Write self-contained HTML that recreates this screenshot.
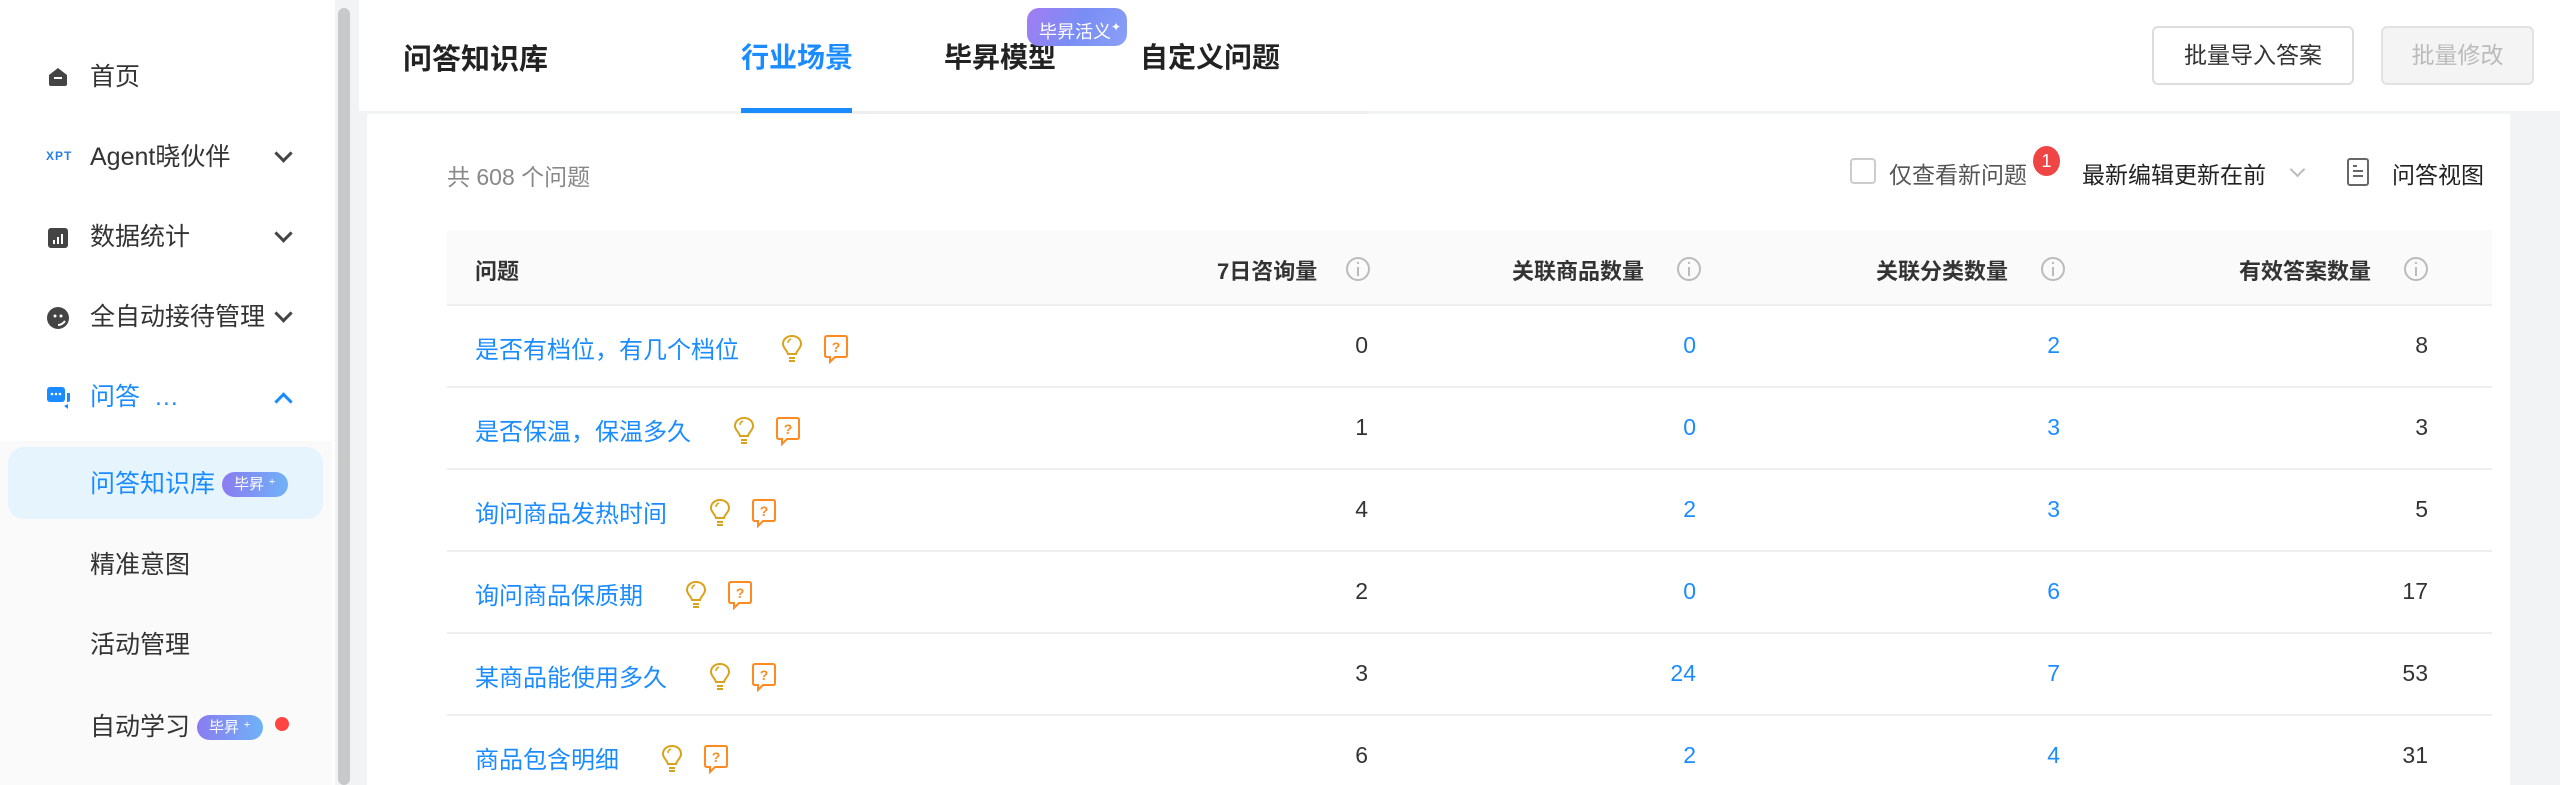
<!DOCTYPE html>
<html><head><meta charset="utf-8"><style>
*{margin:0;padding:0;box-sizing:border-box}
body{width:2560px;height:785px;overflow:hidden;background:#f2f3f5;font-family:"Liberation Sans","Noto Sans CJK SC",sans-serif;color:#333;position:relative}
.a{position:absolute;white-space:nowrap}
.side{position:absolute;left:0;top:0;width:335px;height:785px;background:#fff}
.sub{position:absolute;left:0;top:441px;width:332px;height:344px;background:#fafafa}
.sb{position:absolute;left:338px;top:8px;width:12px;height:777px;background:#c9c9c9;border-radius:6px}
.mi{font-size:25px;color:#333;line-height:30px}
.chev{position:absolute;width:13px;height:13px;border-right:3px solid #444;border-bottom:3px solid #444;transform:rotate(45deg)}
.badge{display:inline-block;background:linear-gradient(90deg,#8a7cf0,#6fb2f8);color:#fff;font-size:15px;border-radius:14px;padding:3px 12px;line-height:19px}
.th{font-size:22px;font-weight:bold;color:#333;top:254px}
.info{position:absolute;width:24px;height:24px;border:2px solid #bbb;border-radius:50%;top:257px}
.info:after{content:"";position:absolute;left:9px;top:8px;width:2px;height:9px;background:#bbb}
.info:before{content:"";position:absolute;left:9px;top:3px;width:2px;height:2px;background:#bbb}
.q{font-size:24px;color:#1a8cff}
.n{font-size:23px;text-align:right;width:100px}
.line{position:absolute;left:447px;width:2045px;height:2px;background:#eee}
</style></head><body>
<div class="side"></div>
<div class="sub"></div>
<div style="position:absolute;left:8px;top:447px;width:315px;height:72px;background:#e6f4fd;border-radius:16px"></div>
<div class="sb"></div>
<svg class="a" style="left:47px;top:66px" width="22" height="22"><path d="M2 9 L11 2 L20 9 V18 Q20 20 18 20 H4 Q2 20 2 18Z" fill="#444"/><rect x="7" y="11" width="8" height="2" fill="#fff"/></svg>
<div class="a mi" style="left:90px;top:62px">首页</div>
<div class="a" style="left:46px;top:149px;font-size:12px;font-weight:bold;color:#2a7fe0;letter-spacing:1px">XPT</div>
<div class="a mi" style="left:90px;top:142px">Agent晓伙伴</div>
<div class="chev" style="left:277px;top:147px"></div>
<svg class="a" style="left:47px;top:227px" width="22" height="22"><rect x="1" y="1" width="20" height="20" rx="3" fill="#444"/><rect x="6" y="13" width="2" height="4" fill="#fff"/><rect x="10" y="10" width="2" height="7" fill="#fff"/><rect x="14" y="7" width="2" height="10" fill="#fff"/></svg>
<div class="a mi" style="left:90px;top:222px">数据统计</div>
<div class="chev" style="left:277px;top:227px"></div>
<svg class="a" style="left:46px;top:306px" width="24" height="24"><circle cx="12" cy="12" r="11" fill="#444"/><circle cx="9" cy="10" r="1.5" fill="#fff"/><circle cx="15" cy="10" r="1.5" fill="#fff"/><path d="M12 19 Q16 19 19 15" stroke="#fff" stroke-width="2" fill="none"/></svg>
<div class="a mi" style="left:90px;top:302px">全自动接待管理</div>
<div class="chev" style="left:277px;top:307px"></div>
<svg class="a" style="left:46px;top:386px" width="26" height="24"><rect x="1" y="1" width="18" height="15" rx="3" fill="#1a8cff"/><path d="M8 16 H22 Q24 16 24 14 V7 H21 V16Z" fill="#1a8cff"/><path d="M18 20 L22 23 L22 18Z" fill="#1a8cff"/><circle cx="6" cy="8" r="1.3" fill="#fff"/><circle cx="10" cy="8" r="1.3" fill="#fff"/><circle cx="14" cy="8" r="1.3" fill="#fff"/></svg>
<div class="a mi" style="left:90px;top:382px;color:#1a8cff">问答 &nbsp;…</div>
<div class="chev" style="left:277px;top:395px;border-color:#1a8cff;transform:rotate(225deg)"></div>
<div class="a mi" style="left:90px;top:469px;color:#1a8cff">问答知识库 <span class="badge" style="vertical-align:3px">毕昇 ⁺</span></div>
<div class="a mi" style="left:90px;top:550px">精准意图</div>
<div class="a mi" style="left:90px;top:630px">活动管理</div>
<div class="a mi" style="left:90px;top:712px">自动学习 <span class="badge" style="vertical-align:3px">毕昇 ⁺</span></div>
<div class="a" style="left:275px;top:717px;width:14px;height:14px;border-radius:50%;background:#f44"></div>
<div class="a" style="left:359px;top:0;width:2201px;height:111px;background:#fff"></div>
<div class="a" style="left:403px;top:36px;font-size:29px;color:#222;font-weight:bold">问答知识库</div>
<div class="a" style="left:741px;top:36px;font-size:28px;color:#1a8cff;font-weight:bold">行业场景</div>
<div class="a" style="left:944px;top:36px;font-size:28px;color:#222;font-weight:bold">毕昇模型</div>
<div class="a" style="left:1140px;top:36px;font-size:28px;color:#222;font-weight:bold">自定义问题</div>
<div class="a" style="left:1027px;top:8px;width:100px;height:38px;border-radius:12px;background:linear-gradient(120deg,#a27cf2,#7a8df5,#8aa0f8);color:#fff;font-size:18px;line-height:38px;padding-left:12px">毕昇活义<sup style="font-size:12px">✦</sup></div>
<div class="a" style="left:741px;top:111px;width:627px;height:3px;background:#eee"></div>
<div class="a" style="left:741px;top:108px;width:111px;height:5px;background:#1a8cff"></div>
<div class="a" style="left:2152px;top:26px;width:202px;height:59px;border:2px solid #ddd;border-radius:6px;background:#fff;font-size:23px;text-align:center;line-height:55px;color:#333">批量导入答案</div>
<div class="a" style="left:2381px;top:26px;width:153px;height:59px;border:2px solid #e2e2e2;border-radius:6px;background:#f4f4f4;font-size:23px;text-align:center;line-height:55px;color:#bbb">批量修改</div>
<div class="a" style="left:367px;top:114px;width:2143px;height:671px;background:#fff"></div>
<div class="a" style="left:447px;top:158px;font-size:23px;color:#888">共 608 个问题</div>
<div class="a" style="left:1850px;top:158px;width:26px;height:26px;border:2px solid #ccc;border-radius:4px"></div>
<div class="a" style="left:1889px;top:156px;font-size:23px;color:#555">仅查看新问题</div>
<div class="a" style="left:2033px;top:146px;width:27px;height:30px;border-radius:50%;background:#f04545;color:#fff;font-size:18px;text-align:center;line-height:30px">1</div>
<div class="a" style="left:2082px;top:156px;font-size:23px;color:#222">最新编辑更新在前</div>
<div class="a" style="left:2292px;top:164px;width:11px;height:11px;border-right:2px solid #bbb;border-bottom:2px solid #bbb;transform:rotate(45deg)"></div>
<svg class="a" style="left:2347px;top:158px" width="22" height="28"><rect x="1" y="1" width="20" height="26" rx="2" fill="none" stroke="#666" stroke-width="2"/><path d="M6 8 H10 M6 13 H16 M6 18 H16" stroke="#666" stroke-width="2"/></svg>
<div class="a" style="left:2392px;top:156px;font-size:23px;color:#222">问答视图</div>
<div class="a" style="left:447px;top:230px;width:2045px;height:75px;background:#fafafa"></div>
<div class="line" style="top:304px"></div>
<div class="a th" style="left:475px">问题</div>
<div class="a th" style="left:1217px">7日咨询量</div><div class="info" style="left:1346px"></div>
<div class="a th" style="left:1512px">关联商品数量</div><div class="info" style="left:1677px"></div>
<div class="a th" style="left:1876px">关联分类数量</div><div class="info" style="left:2041px"></div>
<div class="a th" style="left:2239px">有效答案数量</div><div class="info" style="left:2404px"></div>
<div id="rows"></div>
<script>
var d=[["是否有档位，有几个档位",0,0,2,8],["是否保温，保温多久",1,0,3,3],["询问商品发热时间",4,2,3,5],["询问商品保质期",2,0,6,17],["某商品能使用多久",3,24,7,53],["商品包含明细",6,2,4,31]];
var h="";
d.forEach(function(r,i){var c=346+i*82;var t=c-16;
h+='<div class="a q" style="left:475px;top:'+t+'px">'+r[0]+'<svg style="margin-left:42px;vertical-align:-6px" width="22" height="30"><path d="M11 2 C5 2 2 6 2 10 C2 14 6 16 7 20 H15 C16 16 20 14 20 10 C20 6 17 2 11 2Z M8 24 H14 M8 27 H14" fill="none" stroke="#d9a21b" stroke-width="2"/><path d="M7 9 Q7 6 10 5" fill="none" stroke="#d9a21b" stroke-width="1.5"/></svg><svg style="margin-left:20px;vertical-align:-6px" width="26" height="30"><path d="M4 2 H22 Q24 2 24 4 V21 Q24 23 22 23 H12 L7 28 V23 H4 Q2 23 2 21 V4 Q2 2 4 2Z" fill="none" stroke="#ff8a1f" stroke-width="2"/><text x="13" y="18" font-size="14" font-weight="bold" text-anchor="middle" fill="#ff8a1f" font-family="Liberation Sans">?</text></svg></div>';
h+='<div class="a n" style="left:1268px;top:'+(t+2)+'px;color:#333">'+r[1]+'</div>';
h+='<div class="a n" style="left:1596px;top:'+(t+2)+'px;color:#1a8cff">'+r[2]+'</div>';
h+='<div class="a n" style="left:1960px;top:'+(t+2)+'px;color:#1a8cff">'+r[3]+'</div>';
h+='<div class="a n" style="left:2328px;top:'+(t+2)+'px;color:#333">'+r[4]+'</div>';
if(i<5)h+='<div class="line" style="top:'+(c+40)+'px"></div>';
});
document.getElementById("rows").innerHTML=h;
</script>
</body></html>
